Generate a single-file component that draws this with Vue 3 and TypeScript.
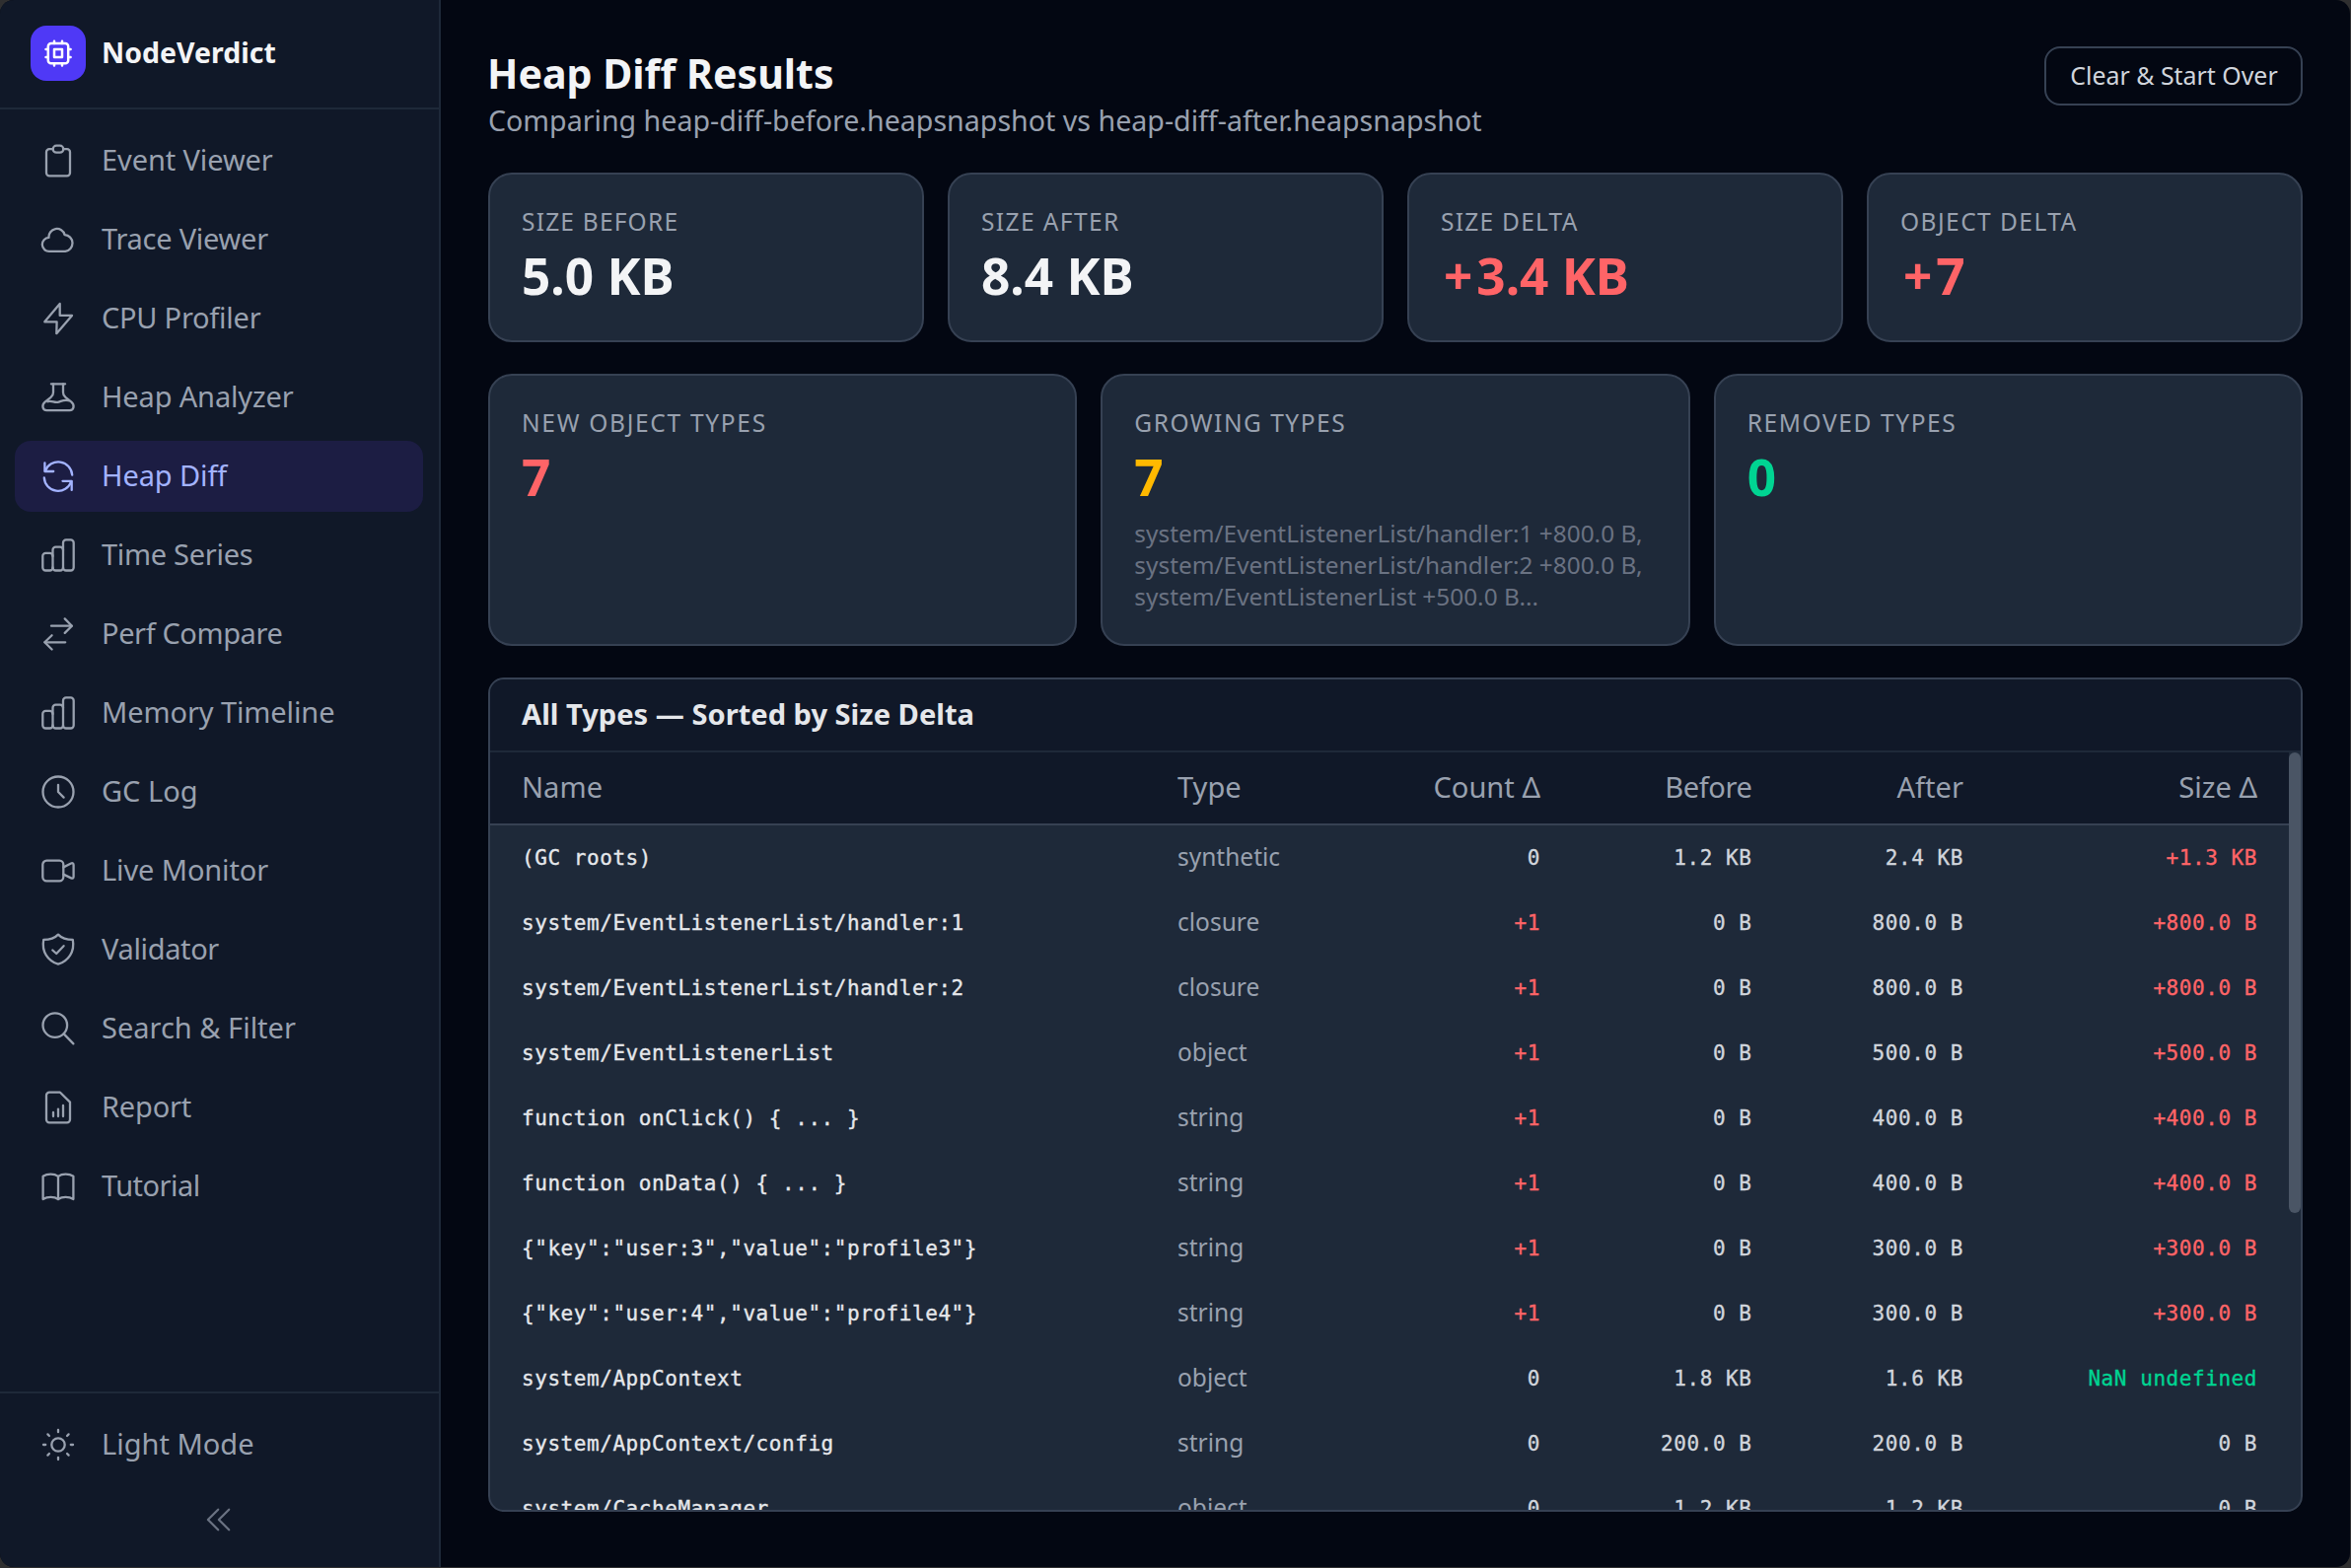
<script setup lang="ts">
interface NavItem { label: string; spacing: number; paths: string[]; active?: boolean }
interface Stat { label: string; value: string; sign?: string; tone?: string; spacing: number; preview?: string[] }
interface Row { name: string; type: string; count: string; before: string; after: string; size: string }

const bars = [
  'M7.3 17.9h4.2a3 3 0 0 1 3 3v11.6a3 3 0 0 1-3 3H7.3a3 3 0 0 1-3-3V20.9a3 3 0 0 1 3-3z',
  'M14.5 21v-6.3a3 3 0 0 1 3-3H22a3 3 0 0 1 3 3v17.8a3 3 0 0 1-3 3h-4.5a3 3 0 0 1-3-3',
  'M25 15V7.4a3 3 0 0 1 3-3h4.7a3 3 0 0 1 3 3v25.1a3 3 0 0 1-3 3H28a3 3 0 0 1-3-3',
]

const nav: NavItem[] = [
  { label: 'Event Viewer', spacing: -0.1, paths: ['M14.7 8.2H11a3 3 0 0 0-3 3v21.1a3 3 0 0 0 3 3h18a3 3 0 0 0 3-3V11.2a3 3 0 0 0-3-3h-3.7', 'M18.2 4.7h3.6a3.5 3.5 0 0 1 0 7h-3.6a3.5 3.5 0 0 1 0-7z'] },
  { label: 'Trace Viewer', spacing: -0.25, paths: ['M10.5 17.9A7 7 0 0 0 11.2 31.9H27.2A8.45 8.45 0 0 0 26.6 15.1A8.2 8.2 0 0 0 10.5 17.9z'] },
  { label: 'CPU Profiler', spacing: -0.25, paths: ['M21.7 4.9L6.3 23.3H18.6L18.3 35.2L34 16.9H21.7z'] },
  { label: 'Heap Analyzer', spacing: -0.15, paths: ['M12.9 6.3h14.2', 'M15 6.5v8.6c0 2-.8 3.6-2.4 4.7l-6 4.8c-3.6 3-2.6 8.6 1.8 8.6h23.2c4.4 0 5.4-5.6 1.8-8.6l-6-4.8c-1.6-1.1-2.4-2.7-2.4-4.7V6.5', 'M9.3 24.2c4.5-1.4 7 1.8 11.2.4s6-2.6 10.2-1.4'] },
  { label: 'Heap Diff', spacing: -0.1, active: true, paths: ['M6.4 6.4V15h8.8', 'M6.9 14.6A14.1 14.1 0 0 1 34.2 18.6', 'M33.7 33.9V24.8h-9.2', 'M5.8 21.4A14.1 14.1 0 0 0 33.2 25.3'] },
  { label: 'Time Series', spacing: -0.3, paths: bars },
  { label: 'Perf Compare', spacing: -0.4, paths: ['M13 11.7h20.6', 'M26.7 4.4l7.2 7.3-7.2 7.2', 'M27.2 28.3H6.5', 'M13.6 21.2l-7.3 7.1 7.3 7.2'] },
  { label: 'Memory Timeline', spacing: -0.1, paths: bars },
  { label: 'GC Log', spacing: 0, paths: ['M20 4.5a15.5 15.5 0 1 0 0 31a15.5 15.5 0 0 0 0-31z', 'M20 12.8V20l5.6 5.6'] },
  { label: 'Live Monitor', spacing: -0.12, paths: ['M8.3 9.7h13a4 4 0 0 1 4 4v12.6a4 4 0 0 1-4 4h-13a4 4 0 0 1-4-4V13.7a4 4 0 0 1 4-4z', 'M25.4 16.4l7.7-3.9c1.5-.7 2.5 0 2.5 1.5v11.9c0 1.5-1 2.2-2.5 1.5l-7.7-3.8'] },
  { label: 'Validator', spacing: -0.35, paths: ['M20 4.6C17 7.8 11 9.9 5.2 9.9C3 22 9.5 31.5 20 34.7C30.5 31.5 37 22 34.8 9.9C29 9.9 23 7.8 20 4.6z', 'M14.3 20.5l3.9 3.5 7.4-7.8'] },
  { label: 'Search & Filter', spacing: 0, paths: ['M16.8 4.3a12.3 12.3 0 1 0 0 24.6a12.3 12.3 0 0 0 0-24.6z', 'M25.7 25.4l9.7 10'] },
  { label: 'Report', spacing: -0.2, paths: ['M22 4.7H11a3 3 0 0 0-3 3v24.6a3 3 0 0 0 3 3h18a3 3 0 0 0 3-3V14.6z', 'M15 25v4.1', 'M20 21.6v7.5', 'M25 18v11.1'] },
  { label: 'Tutorial', spacing: -0.5, paths: ['M20 9.9C16 7 9 7 4.6 9.8V33C9 30.2 16 30.2 20 33C24 30.2 31 30.2 35.4 33V9.8C31 7 24 7 20 9.9z', 'M20 10v23'] },
]

const sunRays = Array.from({ length: 8 }, (_, i) => i * 45)

const summary: Stat[] = [
  { label: 'Size Before', value: '5.0 KB', spacing: 1.2 },
  { label: 'Size After', value: '8.4 KB', spacing: 1.4 },
  { label: 'Size Delta', sign: '+', value: '3.4 KB', tone: 'up', spacing: 1.25 },
  { label: 'Object Delta', sign: '+', value: '7', tone: 'up', spacing: 1.45 },
]

const types: Stat[] = [
  { label: 'New Object Types', value: '7', tone: 'up', spacing: 1.7 },
  {
    label: 'Growing Types', value: '7', tone: 'warn', spacing: 1.5,
    preview: [
      'system/EventListenerList/handler:1 +800.0 B,',
      'system/EventListenerList/handler:2 +800.0 B,',
      'system/EventListenerList +500.0 B...',
    ],
  },
  { label: 'Removed Types', value: '0', tone: 'down', spacing: 1.6 },
]

const rows: Row[] = [
  { name: '(GC roots)', type: 'synthetic', count: '0', before: '1.2 KB', after: '2.4 KB', size: '+1.3 KB' },
  { name: 'system/EventListenerList/handler:1', type: 'closure', count: '+1', before: '0 B', after: '800.0 B', size: '+800.0 B' },
  { name: 'system/EventListenerList/handler:2', type: 'closure', count: '+1', before: '0 B', after: '800.0 B', size: '+800.0 B' },
  { name: 'system/EventListenerList', type: 'object', count: '+1', before: '0 B', after: '500.0 B', size: '+500.0 B' },
  { name: 'function onClick() { ... }', type: 'string', count: '+1', before: '0 B', after: '400.0 B', size: '+400.0 B' },
  { name: 'function onData() { ... }', type: 'string', count: '+1', before: '0 B', after: '400.0 B', size: '+400.0 B' },
  { name: '{"key":"user:3","value":"profile3"}', type: 'string', count: '+1', before: '0 B', after: '300.0 B', size: '+300.0 B' },
  { name: '{"key":"user:4","value":"profile4"}', type: 'string', count: '+1', before: '0 B', after: '300.0 B', size: '+300.0 B' },
  { name: 'system/AppContext', type: 'object', count: '0', before: '1.8 KB', after: '1.6 KB', size: 'NaN undefined' },
  { name: 'system/AppContext/config', type: 'string', count: '0', before: '200.0 B', after: '200.0 B', size: '0 B' },
  { name: 'system/CacheManager', type: 'object', count: '0', before: '1.2 KB', after: '1.2 KB', size: '0 B' },
]

const tone = (v: string) => (v.startsWith('+') ? 'up' : v.startsWith('NaN') ? 'down' : '')
</script>

<template>
  <div class="app">
    <aside class="sidebar">
      <div class="brand">
        <span class="logo">
          <svg viewBox="0 0 40 40" width="40" height="40">
            <path d="M12.8 10h14.4a3 3 0 0 1 3 3v14.2a3 3 0 0 1-3 3H12.8a3 3 0 0 1-3-3V13a3 3 0 0 1 3-3z" />
            <path d="M16 16h8v8h-8z" />
            <path d="M16 7.7V10M24 7.7V10M16 30.3v2.3M24 30.3v2.3M7.5 16h2.3M7.5 24h2.3M30.3 16h2.3M30.3 24h2.3" />
          </svg>
        </span>
        <span class="brand-name">NodeVerdict</span>
      </div>

      <nav class="nav">
        <a v-for="item in nav" :key="item.label" class="nav-item" :class="{ active: item.active }">
          <svg class="icon" viewBox="0 0 40 40"><path v-for="(d, i) in item.paths" :key="i" :d="d" /></svg>
          <span class="nav-label" :style="{ letterSpacing: item.spacing + 'px' }">{{ item.label }}</span>
        </a>
      </nav>

      <div class="footer">
        <a class="nav-item">
          <svg class="icon" viewBox="0 0 40 40">
            <circle cx="20" cy="20" r="6.7" />
            <path v-for="r in sunRays" :key="r" d="M20 5v2.2" :transform="`rotate(${r} 20 20)`" />
          </svg>
          <span class="nav-label">Light Mode</span>
        </a>
        <a class="collapse">
          <svg class="icon" viewBox="0 0 40 40">
            <path d="M19.2 9.8L8.9 20l10.3 10.2M30.2 9.8L19.9 20l10.3 10.2" />
          </svg>
        </a>
      </div>
    </aside>

    <main class="main">
      <header class="head">
        <div>
          <h1>Heap Diff Results</h1>
          <p class="sub">Comparing heap-diff-before.heapsnapshot vs heap-diff-after.heapsnapshot</p>
        </div>
        <button class="clear">Clear &amp; Start Over</button>
      </header>

      <section class="cards four">
        <div v-for="s in summary" :key="s.label" class="card">
          <div class="label" :style="{ letterSpacing: s.spacing + 'px' }">{{ s.label }}</div>
          <div class="value" :class="s.tone"><span v-if="s.sign" class="sign">{{ s.sign }}</span>{{ s.value }}</div>
        </div>
      </section>

      <section class="cards three">
        <div v-for="s in types" :key="s.label" class="card">
          <div class="label" :style="{ letterSpacing: s.spacing + 'px' }">{{ s.label }}</div>
          <div class="value" :class="s.tone">{{ s.value }}</div>
          <div v-if="s.preview" class="preview">
            <div v-for="line in s.preview" :key="line">{{ line }}</div>
          </div>
        </div>
      </section>

      <section class="panel">
        <h2>All Types — Sorted by Size Delta</h2>
        <div class="scroller">
          <div class="table">
            <div class="tr th">
              <span>Name</span><span>Type</span><span class="num">Count Δ</span><span class="num tight">Before</span><span class="num">After</span><span class="num">Size Δ</span>
            </div>
            <div v-for="r in rows" :key="r.name" class="tr td">
              <span class="mono name">{{ r.name }}</span>
              <span class="type">{{ r.type }}</span>
              <span class="mono num" :class="tone(r.count)">{{ r.count }}</span>
              <span class="mono num">{{ r.before }}</span>
              <span class="mono num">{{ r.after }}</span>
              <span class="mono num" :class="tone(r.size)">{{ r.size }}</span>
            </div>
          </div>
          <div class="track"><div class="thumb"></div></div>
        </div>
      </section>
    </main>
  </div>
</template>

<style>
html, body { margin: 0; background: #2f2f30; overflow: hidden; }
</style>

<style scoped>
.app {
  box-sizing: border-box;
  display: flex;
  width: 2383px;
  height: 1589px;
  border-radius: 14px;
  overflow: hidden;
  background: #030712;
  color: #f3f4f6;
  font-family: "Noto Sans", "Open Sans", sans-serif;
}
.app * { box-sizing: border-box; }
svg { fill: none; stroke: currentColor; stroke-width: 2.3; stroke-linecap: round; stroke-linejoin: round; display: block; }

.sidebar {
  flex: none;
  width: 447px;
  display: flex;
  flex-direction: column;
  background: #101828;
  border-right: 2px solid #1e2939;
}
.brand {
  height: 111px;
  display: flex;
  align-items: center;
  gap: 16px;
  padding: 0 0 1px 31px;
  border-bottom: 2px solid #1e2939;
}
.logo {
  width: 56px;
  height: 56px;
  display: flex;
  align-items: center;
  justify-content: center;
  border-radius: 16px;
  background: #4f39f6;
  color: #fff;
}
.logo svg { stroke-width: 2.5; }
.brand-name { font-size: 28.5px; font-weight: 700; line-height: 40px; padding-bottom: 2px; }

.nav { flex: 1; display: flex; flex-direction: column; gap: 8px; padding: 16px 16px 0 15px; }
.nav-item {
  height: 72px;
  display: flex;
  align-items: center;
  gap: 24px;
  padding-left: 24px;
  border-radius: 16px;
  color: #99a1af;
  font-size: 29px;
}
.nav-item.active { background: #1c1d43; color: #a3b3ff; }
.icon { width: 40px; height: 40px; flex: none; }
.nav-label { line-height: 40px; padding-bottom: 2px; white-space: nowrap; }
.footer { height: 178px; border-top: 2px solid #1e2939; padding: 16px 16px 0 15px; }
.collapse { height: 80px; display: flex; align-items: center; justify-content: center; color: #6a7282; }

.main { flex: 1; min-width: 0; display: flex; flex-direction: column; gap: 32px; padding: 47px 48px 56px; }
.head { display: flex; justify-content: space-between; align-items: flex-start; height: 96px; }
h1 { margin: 0 0 0 -1px; font-size: 41.1px; font-weight: 700; line-height: 54px; }
.sub { margin: 0; font-size: 28.6px; line-height: 42px; color: #99a1af; }
.clear {
  width: 262px;
  height: 60px;
  padding: 0 0 2px 1px;
  border: 2px solid #364153;
  border-radius: 16px;
  background: transparent;
  color: #d1d5dc;
  font: 400 24.9px/36px "Noto Sans", sans-serif;
  white-space: nowrap;
}

.cards { display: grid; gap: 24px; }
.four { grid-template-columns: repeat(4, 1fr); height: 172px; }
.three { grid-template-columns: repeat(3, 1fr); height: 276px; }
.card { padding: 32px; border: 2px solid #364153; border-radius: 24px; background: #1e2939; min-width: 0; }
.label { font-size: 24.5px; line-height: 31px; color: #99a1af; text-transform: uppercase; white-space: nowrap; }
.value { margin-top: 5px; font-size: 51.3px; font-weight: 700; line-height: 68px; white-space: nowrap; }
.sign { margin: 0 4px 0 3px; }
.preview { margin-top: 8px; font-size: 24.4px; line-height: 32px; color: #6a7282; white-space: nowrap; }
.warn { color: #ffb900; }
.up, .mono.up { color: #ff6467; }
.down, .mono.down { color: #00d492; }

.panel {
  height: 846px;
  border: 2px solid #364153;
  border-radius: 16px;
  background: #1e2939;
  overflow: hidden;
  display: flex;
  flex-direction: column;
}
h2 {
  flex: none;
  margin: 0;
  height: 74px;
  padding: 0 32px;
  border-bottom: 2px solid #1e2939;
  background: #101828;
  color: #e5e7eb;
  font-size: 29.1px;
  font-weight: 700;
  line-height: 71px;
}
.scroller { flex: 1; min-height: 0; display: flex; overflow: hidden; }
.table { flex: 1; min-width: 0; }
.tr {
  display: grid;
  grid-template-columns: 665px 150px 218px 214.5px 214.5px 298px;
  align-items: center;
  padding: 0 32px;
  white-space: pre;
}
.th { height: 74px; padding-bottom: 2px; background: #101828; border-bottom: 2px solid #364153; color: #99a1af; font-size: 29.1px; line-height: 40px; }
.td { height: 66px; }
.num { text-align: right; }
.tight { letter-spacing: -0.4px; }
.mono {
  font-family: "DejaVu Sans Mono", monospace;
  font-size: 21px;
  letter-spacing: 0.557px;
  line-height: 32px;
  color: #d1d5dc;
  -webkit-text-stroke: 0.35px currentColor;
}
.mono.name { color: #e5e7eb; }
.type { font-size: 24.5px; line-height: 32px; padding-bottom: 2px; color: #99a1af; }
.track { flex: none; width: 12px; }
.thumb { height: 467px; border-radius: 6px; background: #4a5565; }
</style>
